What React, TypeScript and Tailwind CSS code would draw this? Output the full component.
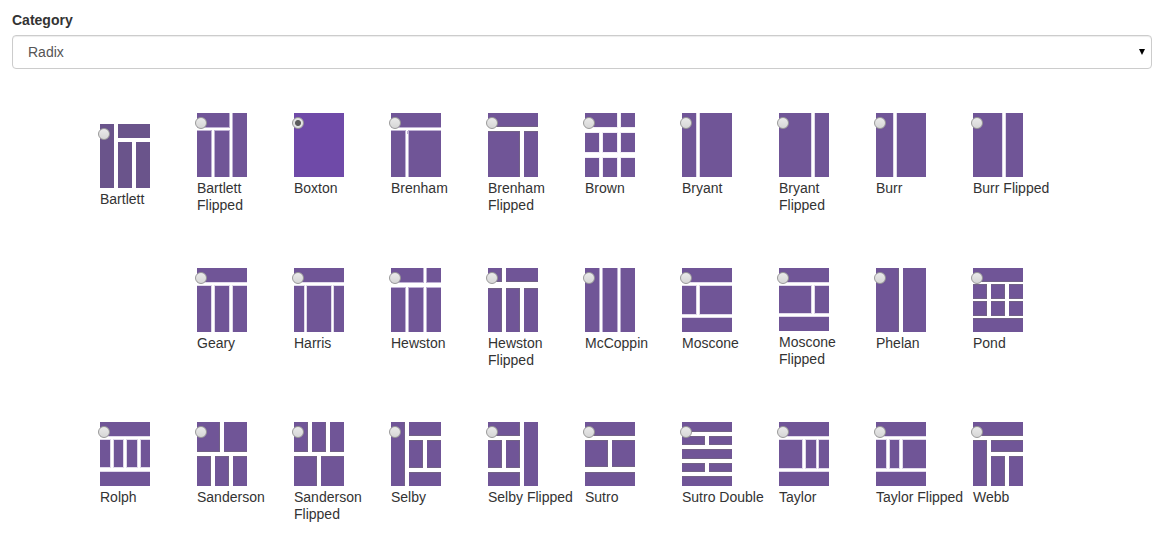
import { useState } from "react";

type Block = [x: number, y: number, w: number, h: number];
type Edge = "none" | "faint" | "light" | "mid" | "dark";

interface Layout {
  name: string;
  blocks: Block[];
  edge: Edge;
  fill?: string;
  height?: number;
  detail?: Block[];
  className?: string;
}

const EDGE_COLORS: Record<Edge, string> = {
  none: "none",
  faint: "#f1edf6",
  light: "#e0d9ea",
  mid: "#beb0d3",
  dark: "#74687f",
};

const header: Block = [0, 0, 50, 14];
const footer: Block = [0, 50, 50, 14];

const thirds = (y: number, h: number): Block[] => [
  [0, y, 14, h],
  [18, y, 14, h],
  [36, y, 14, h],
];
const halves = (y: number, h: number): Block[] => [
  [0, y, 23, h],
  [27, y, 23, h],
];

const LAYOUTS: Layout[] = [
  {
    name: "Bartlett",
    edge: "none",
    fill: "#6a548b",
    className: "pt-[11px]",
    blocks: [[0, 0, 14, 64], [18, 0, 32, 14], [18, 18, 14, 46], [36, 18, 14, 46]],
  },
  { name: "Bartlett Flipped", edge: "mid", blocks: [[0, 0, 32, 14], [36, 0, 14, 64], [0, 18, 14, 46], [18, 18, 14, 46]] },
  { name: "Boxton", edge: "none", fill: "#6f4aa8", blocks: [[0, 0, 50, 64]] },
  { name: "Brenham", edge: "mid", blocks: [header, [0, 18, 14, 46], [18, 18, 32, 46]], detail: [[16, 18, 1, 3]] },
  { name: "Brenham Flipped", edge: "dark", blocks: [header, [0, 18, 32, 46], [36, 18, 14, 46]] },
  { name: "Brown", edge: "faint", blocks: [[0, 0, 32, 14], [36, 0, 14, 14], ...thirds(20, 19), ...thirds(45, 19)] },
  { name: "Bryant", edge: "light", blocks: [[0, 0, 14, 64], [18, 0, 32, 64]] },
  { name: "Bryant Flipped", edge: "light", blocks: [[0, 0, 32, 64], [36, 0, 14, 64]] },
  { name: "Burr", edge: "light", blocks: [[0, 0, 17, 64], [21, 0, 29, 64]] },
  { name: "Burr Flipped", edge: "light", blocks: [[0, 0, 29, 64], [33, 0, 17, 64]] },
  { name: "Geary", edge: "light", className: "col-start-2", blocks: [header, ...thirds(18, 46)] },
  { name: "Harris", edge: "light", blocks: [header, [0, 18, 10, 46], [13, 18, 24, 46], [40, 18, 10, 46]] },
  { name: "Hewston", edge: "mid", blocks: [[0, 0, 32, 14], [36, 0, 14, 14], ...thirds(20, 44)] },
  { name: "Hewston Flipped", edge: "dark", blocks: [[0, 0, 14, 14], [18, 0, 32, 14], ...thirds(20, 44)] },
  { name: "McCoppin", edge: "mid", blocks: thirds(0, 64) },
  { name: "Moscone", edge: "light", blocks: [header, [0, 18, 14, 28], [18, 18, 32, 28], footer] },
  { name: "Moscone Flipped", edge: "light", height: 63, blocks: [header, [0, 18, 32, 27], [36, 18, 14, 27], [0, 49, 50, 14]] },
  { name: "Phelan", edge: "dark", blocks: halves(0, 64) },
  { name: "Pond", edge: "dark", blocks: [header, ...thirds(16, 15), ...thirds(33, 15), footer] },
  { name: "Rolph", edge: "light", blocks: [header, [0, 18, 10, 27], [14, 18, 9, 27], [27, 18, 10, 27], [41, 18, 9, 27], footer] },
  { name: "Sanderson", edge: "dark", blocks: [...halves(0, 30), ...thirds(34, 30)] },
  { name: "Sanderson Flipped", edge: "dark", blocks: [...thirds(0, 30), ...halves(34, 30)] },
  {
    name: "Selby",
    edge: "dark",
    blocks: [[0, 0, 14, 64], [18, 0, 32, 14], [18, 18, 14, 28], [36, 18, 14, 28], [18, 50, 32, 14]],
  },
  {
    name: "Selby Flipped",
    edge: "dark",
    blocks: [[0, 0, 32, 14], [0, 18, 14, 28], [18, 18, 14, 28], [0, 50, 32, 14], [36, 0, 14, 64]],
  },
  { name: "Sutro", edge: "dark", blocks: [header, ...halves(18, 27), footer] },
  { name: "Sutro Double", edge: "dark", blocks: [[0, 0, 50, 10], ...halves(14, 9), [0, 27, 50, 10], ...halves(41, 9), [0, 54, 50, 10]] },
  { name: "Taylor", edge: "light", blocks: [header, [0, 18, 23, 28], [27, 18, 10, 28], [40, 18, 10, 28], footer] },
  { name: "Taylor Flipped", edge: "light", blocks: [header, [0, 18, 10, 28], [14, 18, 9, 28], [27, 18, 23, 28], footer] },
  {
    name: "Webb",
    edge: "dark",
    blocks: [header, [0, 18, 14, 46], [18, 18, 32, 12], [18, 34, 14, 30], [36, 34, 14, 30]],
  },
];

function LayoutIcon({ blocks, edge, fill = "#705597", height = 64, detail = [] }: Layout) {
  const color = EDGE_COLORS[edge];
  const outer = edge === "faint" || edge === "light" || edge === "mid";
  return (
    <svg width="50" height={height} viewBox={`0 0 50 ${height}`} shapeRendering="crispEdges" aria-hidden="true" className="block">
      {outer &&
        blocks.map(([x, y, w, h], i) => <rect key={i} x={x - 1} y={y - 1} width={w + 2} height={h + 2} fill={color} />)}
      {blocks.map(([x, y, w, h], i) => (
        <rect key={i} x={x} y={y} width={w} height={h} fill={fill} />
      ))}
      {edge === "dark" &&
        blocks.map(([x, y, w, h], i) => (
          <g key={i} fill={color} opacity="0.7">
            {y > 0 && <rect x={x} y={y} width={w} height={1} />}
            {y + h < height && <rect x={x} y={y + h - 1} width={w} height={1} />}
            {x + w < 50 && <rect x={x + w - 1} y={y} width={1} height={h} />}
          </g>
        ))}
      {detail.map(([x, y, w, h], i) => (
        <rect key={i} x={x} y={y} width={w} height={h} fill={color} />
      ))}
    </svg>
  );
}

function LayoutOption({ layout, checked, onSelect }: { layout: Layout; checked: boolean; onSelect: () => void }) {
  return (
    <div className={layout.className}>
      <label className="relative block w-[90px] text-sm leading-[17px]">
        <input
          type="radio"
          name="layout"
          checked={checked}
          onChange={onSelect}
          className="absolute top-1 -left-0.5 m-0 size-3 appearance-none rounded-full border border-[#999] bg-[linear-gradient(#eaeaea,#d6d6d6)] checked:bg-[radial-gradient(circle,#5c5c5c_2.5px,#e2e2e2_3.5px)]"
        />
        <LayoutIcon {...layout} />
        <span className="block pt-[3px]">{layout.name}</span>
      </label>
    </div>
  );
}

export default function App() {
  const [selected, setSelected] = useState("Boxton");

  return (
    <form className="bg-white px-3 pt-2.5 pb-5 font-['Liberation_Sans',Arial,sans-serif] text-sm text-[#333]">
      <label htmlFor="category" className="block leading-5 font-bold">
        Category
      </label>
      <div className="relative mt-[5px] mr-px">
        <select
          id="category"
          defaultValue="radix"
          className="block h-[34px] w-full appearance-none rounded border border-[#ccc] bg-white px-[15px] text-sm text-[#555] shadow-[inset_0_1px_1px_rgba(0,0,0,0.075)]"
        >
          <option value="radix">Radix</option>
        </select>
        <svg width="6" height="6" viewBox="0 0 6 6" aria-hidden="true" className="pointer-events-none absolute top-3.5 right-[7px]">
          <path d="M0 0h6L3 6z" fill="#000" />
        </svg>
      </div>
      <fieldset
        aria-label="Layout"
        className="mt-11 grid grid-cols-[repeat(auto-fill,97px)] grid-rows-[155px_154px] pl-[88px]"
      >
        {LAYOUTS.map((layout) => (
          <LayoutOption
            key={layout.name}
            layout={layout}
            checked={selected === layout.name}
            onSelect={() => setSelected(layout.name)}
          />
        ))}
      </fieldset>
    </form>
  );
}
